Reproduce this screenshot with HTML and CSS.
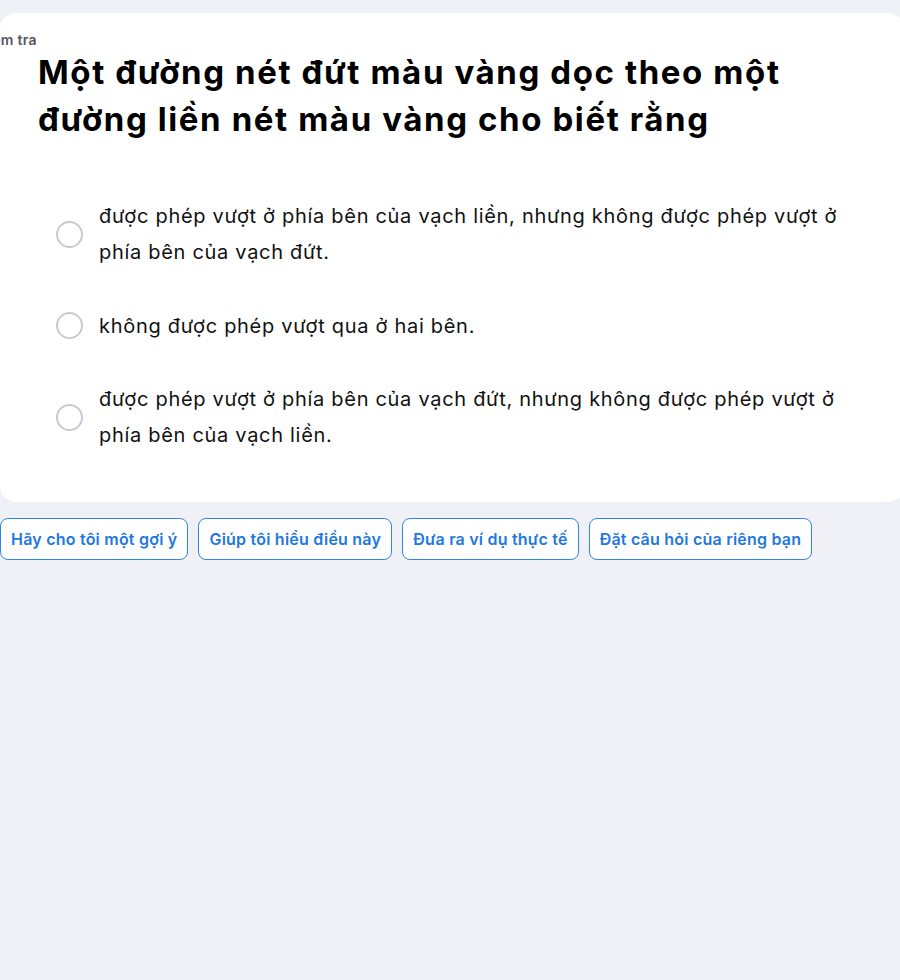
FILE: index.html
```html
<!DOCTYPE html>
<html lang="vi">
<head>
<meta charset="utf-8">
<link rel="stylesheet" href="styles.css">
</head>
<body>
<div class="page">
  <section class="card">
    <div class="label">Kiểm tra</div>
    <h1 class="question">Một đường nét đứt màu vàng dọc theo một đường liền nét màu vàng cho biết rằng</h1>
    <ul class="options">
      <li class="option"><span class="radio"></span><span class="option-text">được phép vượt ở phía bên của vạch liền, nhưng không được phép vượt ở phía bên của vạch đứt.</span></li>
      <li class="option"><span class="radio"></span><span class="option-text">không được phép vượt qua ở hai bên.</span></li>
      <li class="option"><span class="radio"></span><span class="option-text">được phép vượt ở phía bên của vạch đứt, nhưng không được phép vượt ở phía bên của vạch liền.</span></li>
    </ul>
  </section>
  <div class="actions">
    <button class="chip">Hãy cho tôi một gợi ý</button>
    <button class="chip">Giúp tôi hiểu điều này</button>
    <button class="chip">Đưa ra ví dụ thực tế</button>
    <button class="chip">Đặt câu hỏi của riêng bạn</button>
  </div>
</div>
</body>
</html>
```
FILE: styles.css
```css
html, body {
  margin: 0;
  padding: 0;
  background: #f0f1f6;
  overflow: hidden;
}
body {
  font-family: "Inter", "Noto Sans", sans-serif;
  color: #111;
}
.page {
  width: 904px;
  padding-top: 13px;
}
.card {
  background: #fff;
  border-radius: 16px;
  padding: 18px 46px 49px 38px;
}
.label {
  margin-left: -60px;
  font-size: 14px;
  font-weight: 600;
  color: #55555f;
  line-height: 18px;
  letter-spacing: 0.3px;
}
.question {
  margin: 0;
  font-size: 33px;
  line-height: 47px;
  font-weight: 700;
  letter-spacing: 1.6px;
  color: #000;
}
.options {
  list-style: none;
  margin: 55px 0 0 0;
  padding: 0 0 0 18px;
  display: flex;
  flex-direction: column;
  gap: 37.5px;
}
.option {
  display: flex;
  align-items: center;
  gap: 16px;
}
.radio {
  flex: none;
  width: 23px;
  height: 23px;
  border: 2px solid #c9c9d6;
  border-radius: 50%;
  background: #fff;
}
.option-text {
  font-size: 20px;
  line-height: 36px;
  letter-spacing: 0.7px;
  color: #111;
}
.actions {
  display: flex;
  gap: 10px;
  margin-top: 16px;
}
.chip {
  font-family: "Inter", "Noto Sans", sans-serif;
  font-size: 16px;
  font-weight: 600;
  letter-spacing: 0.22px;
  color: #1f78e0;
  background: #fff;
  border: 1px solid #2f86e6;
  border-radius: 8px;
  height: 42px;
  padding: 0 10px;
  cursor: pointer;
}
```
